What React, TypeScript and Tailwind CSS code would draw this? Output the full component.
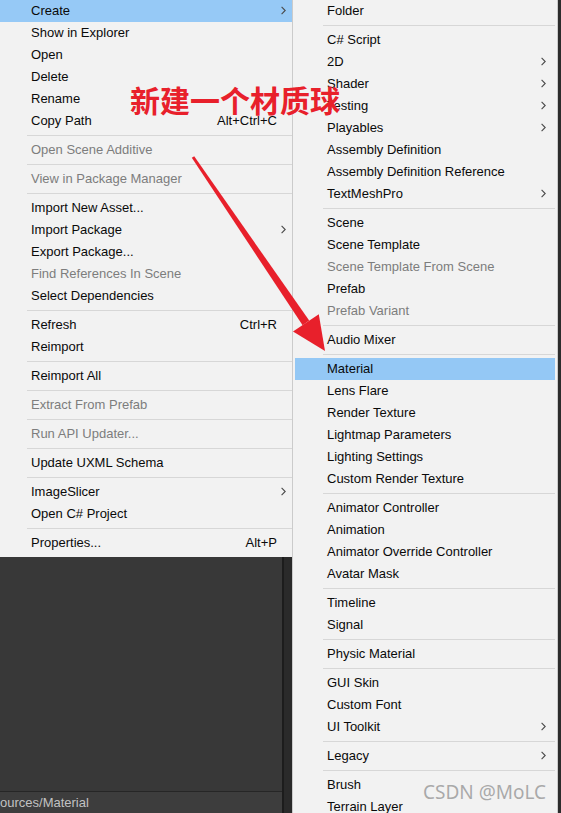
import React from "react";

type Item =
  | { sep: true }
  | { label: string; shortcut?: string; sub?: boolean; disabled?: boolean; active?: boolean };

const S: Item = { sep: true };

const leftItems: Item[] = [
  { label: "Create", sub: true, active: true },
  { label: "Show in Explorer" },
  { label: "Open" },
  { label: "Delete" },
  { label: "Rename" },
  { label: "Copy Path", shortcut: "Alt+Ctrl+C" },
  S,
  { label: "Open Scene Additive", disabled: true },
  S,
  { label: "View in Package Manager", disabled: true },
  S,
  { label: "Import New Asset..." },
  { label: "Import Package", sub: true },
  { label: "Export Package..." },
  { label: "Find References In Scene", disabled: true },
  { label: "Select Dependencies" },
  S,
  { label: "Refresh", shortcut: "Ctrl+R" },
  { label: "Reimport" },
  S,
  { label: "Reimport All" },
  S,
  { label: "Extract From Prefab", disabled: true },
  S,
  { label: "Run API Updater...", disabled: true },
  S,
  { label: "Update UXML Schema" },
  S,
  { label: "ImageSlicer", sub: true },
  { label: "Open C# Project" },
  S,
  { label: "Properties...", shortcut: "Alt+P" },
];

const rightItems: Item[] = [
  { label: "Folder" },
  S,
  { label: "C# Script" },
  { label: "2D", sub: true },
  { label: "Shader", sub: true },
  { label: "Testing", sub: true },
  { label: "Playables", sub: true },
  { label: "Assembly Definition" },
  { label: "Assembly Definition Reference" },
  { label: "TextMeshPro", sub: true },
  S,
  { label: "Scene" },
  { label: "Scene Template" },
  { label: "Scene Template From Scene", disabled: true },
  { label: "Prefab" },
  { label: "Prefab Variant", disabled: true },
  S,
  { label: "Audio Mixer" },
  S,
  { label: "Material", active: true },
  { label: "Lens Flare" },
  { label: "Render Texture" },
  { label: "Lightmap Parameters" },
  { label: "Lighting Settings" },
  { label: "Custom Render Texture" },
  S,
  { label: "Animator Controller" },
  { label: "Animation" },
  { label: "Animator Override Controller" },
  { label: "Avatar Mask" },
  S,
  { label: "Timeline" },
  { label: "Signal" },
  S,
  { label: "Physic Material" },
  S,
  { label: "GUI Skin" },
  { label: "Custom Font" },
  { label: "UI Toolkit", sub: true },
  S,
  { label: "Legacy", sub: true },
  S,
  { label: "Brush" },
  { label: "Terrain Layer" },
];

function Chevron() {
  return (
    <svg width="5" height="9" viewBox="0 0 5 9" className="shrink-0">
      <polyline points="0.6,0.8 4.2,4.5 0.6,8.2" fill="none" stroke="#4a4a4a" strokeWidth="1.1" />
    </svg>
  );
}

function LeftMenu() {
  return (
    <div className="bg-[#f2f2f2] pb-[3px]">
      {leftItems.map((it, i) =>
        "sep" in it ? (
          <div key={i} className="h-[7px] flex items-center pl-[27px]">
            <div className="h-px w-full bg-[#d7d7d7]" />
          </div>
        ) : (
          <div
            key={i}
            className={`h-[22px] flex items-center pl-[31px] pr-[6px] pb-[2px] ${it.active ? "bg-[#96c9f6]" : ""} ${
              it.disabled ? "text-[#7d7d7d]" : "text-[#0a0a0a]"
            }`}
          >
            <span className="flex-1 whitespace-nowrap">{it.label}</span>
            {it.shortcut && <span className="mr-[9px] whitespace-nowrap">{it.shortcut}</span>}
            {it.sub && <Chevron />}
          </div>
        )
      )}
    </div>
  );
}

function RightMenu() {
  return (
    <div className="w-[266px] h-full bg-[#f2f2f2] border-l border-r border-[#cbcbcb] px-[2px]">
      {rightItems.map((it, i) =>
        "sep" in it ? (
          <div key={i} className="h-[7px] flex items-center pl-[28px]">
            <div className="h-px w-full bg-[#d7d7d7]" />
          </div>
        ) : (
          <div
            key={i}
            className={`h-[22px] flex items-center pl-[32px] pr-[9px] pb-[2px] ${it.active ? "bg-[#94c8f5]" : ""} ${
              it.disabled ? "text-[#7d7d7d]" : "text-[#0a0a0a]"
            }`}
          >
            <span className="flex-1 whitespace-nowrap">{it.label}</span>
            {it.sub && <Chevron />}
          </div>
        )
      )}
    </div>
  );
}

export default function App() {
  return (
    <div
      className="relative w-[561px] h-[813px] overflow-hidden flex bg-[#2b2b2b] text-[13px] leading-none"
      style={{ fontFamily: '"Liberation Sans", Arial, sans-serif' }}
    >
      <div className="w-[292px] h-full flex flex-col">
        <LeftMenu />
        <div className="flex-1 flex flex-col shadow-[inset_0_2px_2px_rgba(0,0,0,0.35)]">
          <div className="flex-1 flex">
            <div className="flex-1 bg-[#383838]" />
            <div className="w-[2px] bg-[#1c1c1c]" />
            <div className="w-[8px] bg-[#2a2a2a]" />
          </div>
          <div className="h-[22px] flex">
            <div className="flex-1 bg-[#3d3d3d] border-t border-[#262626] flex items-center pb-[1px] text-[#c2c2c2] text-[13px]">
              ources/Material
            </div>
            <div className="w-[2px] bg-[#1c1c1c]" />
            <div className="w-[8px] bg-[#2a2a2a]" />
          </div>
        </div>
      </div>
      <RightMenu />
      <div className="flex-1 bg-[#2c2c2c]" />

      <div
        className="absolute left-[130px] top-[84px] text-[30px] font-bold leading-none text-[#e8202b] whitespace-nowrap"
        style={{ fontFamily: '"Noto Sans CJK SC", sans-serif' }}
      >
        新建一个材质球
      </div>

      <svg className="absolute inset-0 pointer-events-none" width="561" height="813" viewBox="0 0 561 813">
        <polygon points="194.2,156.2 309.2,320.6 302.6,325.2 191.8,157.8" fill="#e8202b" />
        <polygon points="318.8,314.2 325,351 293,331.6" fill="#e8202b" />
      </svg>

      <div
        className="absolute left-[423px] top-[783px] text-[19px] leading-none text-[#a9a9a9] whitespace-nowrap"
        style={{ fontFamily: '"Noto Sans", sans-serif', textShadow: "0 0 1px rgba(255,255,255,0.6)" }}
      >
        CSDN @MoLC
      </div>
    </div>
  );
}
